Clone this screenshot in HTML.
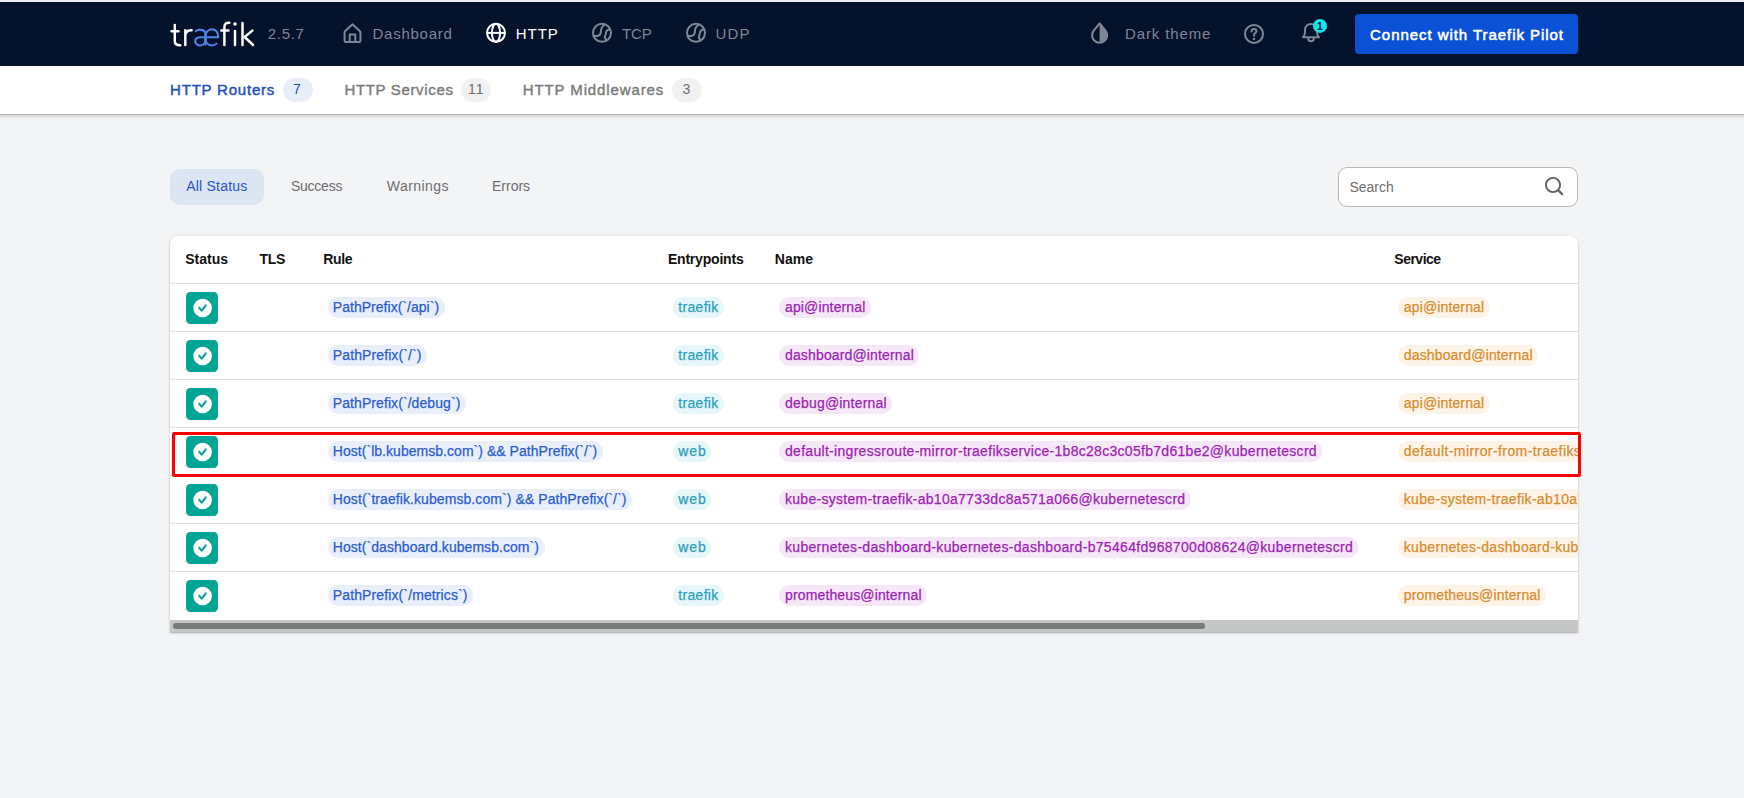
<!DOCTYPE html>
<html><head><meta charset="utf-8">
<style>
html,body{margin:0;padding:0;}
body{width:1744px;height:798px;overflow:hidden;position:relative;background:#f3f4f6;font-family:"Liberation Sans",sans-serif;}
.abs{position:absolute;}
.t{position:absolute;white-space:nowrap;line-height:1;}
.chip{position:absolute;height:21px;border-radius:10px;}
</style></head><body>
<div class="abs" style="left:0;top:0;width:1744px;height:2px;background:#efefed"></div>
<div class="abs" style="left:0;top:2px;width:1744px;height:64px;background:#05122b"></div>
<div class="abs" style="left:0;top:66px;width:1744px;height:48px;background:#ffffff"></div>
<div class="abs" style="left:0;top:114px;width:1744px;height:1px;background:#b3b7b9"></div>
<div class="abs" style="left:0;top:115px;width:1744px;height:4px;background:linear-gradient(#d5d7d9,#f3f4f6)"></div>
<svg class="abs" style="left:0;top:0" width="300" height="66" viewBox="0 0 300 66">
<g fill="none" stroke="#ffffff" stroke-width="2.45" stroke-linecap="round" stroke-linejoin="round">
<path d="M174.8,24.9 V41.2 C174.8,44.2 176.5,45.2 180.2,45.2"/>
<path d="M171.6,31.2 H178.4"/>
<path d="M185.3,30.3 V45 M185.3,35 C186,31.5 188.5,30.1 191.6,30.3"/>
<path d="M224.4,45 V27 C224.4,23.8 226.2,22.6 229.3,22.8 M221.3,30.4 H228.5"/>
<path d="M235,31 V45"/>
<path d="M242.5,23 V45 M252.4,30.6 L244.6,37 L253.1,45"/>
</g>
<circle cx="235" cy="23.9" r="1.75" fill="#ffffff"/>
<g fill="none" stroke="#5086ec" stroke-width="2.05" stroke-linecap="round" stroke-linejoin="round">
<path d="M195.8,31.2 C197.3,29.4 203.8,28.8 205.4,32.8 V44.6"/>
<path d="M205.4,37.3 H199.8 C193.6,37.3 193.8,45.4 199.8,45.4 C203.2,45.4 205.4,43.2 205.4,40.5"/>
<path d="M205.4,37.3 H218.2 C218.4,31.6 215.2,29.3 211.9,29.3 C207.8,29.3 205.4,32.6 205.4,37.5 C205.4,42.2 207.8,45.4 211.9,45.4 C213.9,45.4 215.5,44.7 216.6,43.6"/>
</g>
</svg>
<svg class="abs" style="left:0;top:0" width="1744" height="66" viewBox="0 0 1744 66">
<g fill="none" stroke="#7f8696" stroke-width="2" stroke-linecap="round" stroke-linejoin="round">
<path d="M345.6,42 H359.4 Q360.4,42 360.4,41 V32.2 Q360.4,31.6 360,31.2 L352.5,24.3 L345,31.2 Q344.6,31.6 344.6,32.2 V41 Q344.6,42 345.6,42 Z"/>
<path d="M349.7,42 V34.4 H355.3 V42"/>
<circle cx="602" cy="32.85" r="9"/>
<path d="M605,24.5 C602,26.4 601,28 601,30.5 C601,33.5 600.5,35.7 597,35.9 L593.6,36"/>
<path d="M609.8,29.4 C607,29.8 606,31 606,33 C606,34.5 604.5,36 604.8,37.5 C605,38.5 605.8,39.3 606.5,39.8"/>
<circle cx="696" cy="32.85" r="9"/>
<path d="M699,24.5 C696,26.4 695,28 695,30.5 C695,33.5 694.5,35.7 691,35.9 L687.6,36"/>
<path d="M703.8,29.4 C701,29.8 700,31 700,33 C700,34.5 698.5,36 698.8,37.5 C699,38.5 699.8,39.3 700.5,39.8"/>
<circle cx="1254" cy="33.9" r="9"/>
<path d="M1251.6,31.4 C1251.6,29.8 1252.7,29 1254,29 C1255.4,29 1256.4,29.9 1256.4,31.2 C1256.4,33 1254,33.2 1254,35.3 V35.8"/>
<path d="M1303,37.3 C1304.2,36.1 1305,34.7 1305,32.2 V29.8 C1305,26.3 1307.8,23.9 1311,23.9 C1314.2,23.9 1317,26.3 1317,29.8 V32.2 C1317,34.7 1317.8,36.1 1319,37.3 Z"/>
<path d="M1308.2,38.4 A2.8,2.8 0 0 0 1313.8,38.4"/>
</g>
<circle cx="1254" cy="38.9" r="1.2" fill="#7f8696"/>
<g fill="none" stroke="#ffffff" stroke-width="2">
<circle cx="496" cy="32.85" r="9"/>
<ellipse cx="496" cy="32.85" rx="4.1" ry="9"/>
<path d="M487,32.9 H505"/>
</g>
<g transform="translate(1099.6,35.3)">
<path d="M0,-12 L5.85,-4.69 A7.5,7.5 0 1 1 -5.85,-4.69 Z" fill="none" stroke="#7f8696" stroke-width="2.1" stroke-linejoin="round"/>
<path d="M0,-12 L5.85,-4.69 A7.5,7.5 0 0 1 0,7.5 Z" fill="#7f8696"/>
</g>
<circle cx="1320" cy="25.9" r="7" fill="#14e6ee"/>
</svg>
<div class="abs" style="left:1355px;top:14px;width:223px;height:40px;border-radius:4px;background:#0b51d6"></div>
<div class="abs" style="left:283px;top:78px;width:30px;height:24px;border-radius:12px;background:#e7eef9"></div>
<div class="abs" style="left:461px;top:78px;width:30px;height:24px;border-radius:12px;background:#f1f1f1"></div>
<div class="abs" style="left:672px;top:78px;width:30px;height:24px;border-radius:12px;background:#f1f1f1"></div>
<div class="abs" style="left:170px;top:169px;width:94px;height:36px;border-radius:10px;background:#dce5f2"></div>
<div class="abs" style="left:1338px;top:167px;width:238px;height:38px;border-radius:9px;background:#fff;border:1px solid #b8b8b8"></div>
<svg class="abs" style="left:1536px;top:170px" width="36" height="32" viewBox="1536 170 36 32">
<circle cx="1553" cy="185" r="7.1" fill="none" stroke="#626262" stroke-width="1.9"/>
<path d="M1558.4,190.4 L1562.2,194.2" stroke="#626262" stroke-width="2.2" stroke-linecap="round"/>
</svg>
<div class="abs" style="left:170px;top:236px;width:1408px;height:396px;border-radius:8px 8px 0 0;background:#fff;box-shadow:0 1px 3px rgba(0,0,0,0.2),0 1px 1px rgba(0,0,0,0.14)"></div>
<div class="abs" style="left:170px;top:283px;width:1408px;height:1px;background:#dedede"></div><div class="abs" style="left:170px;top:331px;width:1408px;height:1px;background:#dedede"></div><div class="abs" style="left:170px;top:379px;width:1408px;height:1px;background:#dedede"></div><div class="abs" style="left:170px;top:427px;width:1408px;height:1px;background:#dedede"></div><div class="abs" style="left:170px;top:475px;width:1408px;height:1px;background:#dedede"></div><div class="abs" style="left:170px;top:523px;width:1408px;height:1px;background:#dedede"></div><div class="abs" style="left:170px;top:571px;width:1408px;height:1px;background:#dedede"></div>
<svg class="abs" style="left:186px;top:292px" width="32" height="32" viewBox="0 0 32 32">
<rect x="0" y="0" width="32" height="32" rx="4.5" fill="#00a495"/>
<circle cx="16.6" cy="16" r="9.3" fill="#ffffff"/>
<path d="M13.3,15.9 L15.7,18.6 L19.7,13.4" fill="none" stroke="#00a495" stroke-width="2.1" stroke-linecap="round" stroke-linejoin="round"/>
</svg><svg class="abs" style="left:186px;top:340px" width="32" height="32" viewBox="0 0 32 32">
<rect x="0" y="0" width="32" height="32" rx="4.5" fill="#00a495"/>
<circle cx="16.6" cy="16" r="9.3" fill="#ffffff"/>
<path d="M13.3,15.9 L15.7,18.6 L19.7,13.4" fill="none" stroke="#00a495" stroke-width="2.1" stroke-linecap="round" stroke-linejoin="round"/>
</svg><svg class="abs" style="left:186px;top:388px" width="32" height="32" viewBox="0 0 32 32">
<rect x="0" y="0" width="32" height="32" rx="4.5" fill="#00a495"/>
<circle cx="16.6" cy="16" r="9.3" fill="#ffffff"/>
<path d="M13.3,15.9 L15.7,18.6 L19.7,13.4" fill="none" stroke="#00a495" stroke-width="2.1" stroke-linecap="round" stroke-linejoin="round"/>
</svg><svg class="abs" style="left:186px;top:436px" width="32" height="32" viewBox="0 0 32 32">
<rect x="0" y="0" width="32" height="32" rx="4.5" fill="#00a495"/>
<circle cx="16.6" cy="16" r="9.3" fill="#ffffff"/>
<path d="M13.3,15.9 L15.7,18.6 L19.7,13.4" fill="none" stroke="#00a495" stroke-width="2.1" stroke-linecap="round" stroke-linejoin="round"/>
</svg><svg class="abs" style="left:186px;top:484px" width="32" height="32" viewBox="0 0 32 32">
<rect x="0" y="0" width="32" height="32" rx="4.5" fill="#00a495"/>
<circle cx="16.6" cy="16" r="9.3" fill="#ffffff"/>
<path d="M13.3,15.9 L15.7,18.6 L19.7,13.4" fill="none" stroke="#00a495" stroke-width="2.1" stroke-linecap="round" stroke-linejoin="round"/>
</svg><svg class="abs" style="left:186px;top:532px" width="32" height="32" viewBox="0 0 32 32">
<rect x="0" y="0" width="32" height="32" rx="4.5" fill="#00a495"/>
<circle cx="16.6" cy="16" r="9.3" fill="#ffffff"/>
<path d="M13.3,15.9 L15.7,18.6 L19.7,13.4" fill="none" stroke="#00a495" stroke-width="2.1" stroke-linecap="round" stroke-linejoin="round"/>
</svg><svg class="abs" style="left:186px;top:580px" width="32" height="32" viewBox="0 0 32 32">
<rect x="0" y="0" width="32" height="32" rx="4.5" fill="#00a495"/>
<circle cx="16.6" cy="16" r="9.3" fill="#ffffff"/>
<path d="M13.3,15.9 L15.7,18.6 L19.7,13.4" fill="none" stroke="#00a495" stroke-width="2.1" stroke-linecap="round" stroke-linejoin="round"/>
</svg>
<div style="position:absolute;left:170px;top:236px;width:1408px;height:396px;overflow:hidden">
<div style="position:absolute;left:-170px;top:-236px;width:1744px;height:798px">
<div class="chip" style="left:328px;top:297px;width:117px;background:#e8effa"></div>
<div class="chip" style="left:673px;top:297px;width:51px;background:#e7f6f8"></div>
<div class="chip" style="left:779px;top:297px;width:92px;background:#f6e7f8"></div>
<div class="chip" style="left:1398px;top:297px;width:92px;background:#fdf3e7"></div>
<div class="chip" style="left:328px;top:345px;width:99px;background:#e8effa"></div>
<div class="chip" style="left:673px;top:345px;width:51px;background:#e7f6f8"></div>
<div class="chip" style="left:779px;top:345px;width:140px;background:#f6e7f8"></div>
<div class="chip" style="left:1398px;top:345px;width:140px;background:#fdf3e7"></div>
<div class="chip" style="left:328px;top:393px;width:138px;background:#e8effa"></div>
<div class="chip" style="left:673px;top:393px;width:51px;background:#e7f6f8"></div>
<div class="chip" style="left:779px;top:393px;width:113px;background:#f6e7f8"></div>
<div class="chip" style="left:1398px;top:393px;width:92px;background:#fdf3e7"></div>
<div class="chip" style="left:328px;top:441px;width:275px;background:#e8effa"></div>
<div class="chip" style="left:673px;top:441px;width:38px;background:#e7f6f8"></div>
<div class="chip" style="left:779px;top:441px;width:543px;background:#f6e7f8"></div>
<div class="chip" style="left:1398px;top:441px;width:400px;background:#fdf3e7"></div>
<div class="chip" style="left:328px;top:489px;width:304px;background:#e8effa"></div>
<div class="chip" style="left:673px;top:489px;width:38px;background:#e7f6f8"></div>
<div class="chip" style="left:779px;top:489px;width:412px;background:#f6e7f8"></div>
<div class="chip" style="left:1398px;top:489px;width:412px;background:#fdf3e7"></div>
<div class="chip" style="left:328px;top:537px;width:217px;background:#e8effa"></div>
<div class="chip" style="left:673px;top:537px;width:38px;background:#e7f6f8"></div>
<div class="chip" style="left:779px;top:537px;width:579px;background:#f6e7f8"></div>
<div class="chip" style="left:1398px;top:537px;width:579px;background:#fdf3e7"></div>
<div class="chip" style="left:328px;top:585px;width:145px;background:#e8effa"></div>
<div class="chip" style="left:673px;top:585px;width:51px;background:#e7f6f8"></div>
<div class="chip" style="left:779px;top:585px;width:148px;background:#f6e7f8"></div>
<div class="chip" style="left:1398px;top:585px;width:148px;background:#fdf3e7"></div>
<span class="t" id="k_rule0" style="left:332.80px;top:300.15px;font-size:14px;font-weight:normal;color:#2b5ccf;letter-spacing:0.029px;-webkit-text-stroke:0.25px #2b5ccf;">PathPrefix(`/api`)</span><span class="t" id="k_ep0" style="left:678.20px;top:300.15px;font-size:14px;font-weight:normal;color:#2c9fbd;letter-spacing:0.333px;-webkit-text-stroke:0.25px #2c9fbd;">traefik</span><span class="t" id="k_nm0" style="left:785.00px;top:300.15px;font-size:14px;font-weight:normal;color:#9c1fb2;letter-spacing:0.136px;-webkit-text-stroke:0.25px #9c1fb2;">api@internal</span><span class="t" id="k_sv0" style="left:1403.80px;top:300.15px;font-size:14px;font-weight:normal;color:#d88c2e;letter-spacing:0.136px;-webkit-text-stroke:0.25px #d88c2e;">api@internal</span><span class="t" id="k_rule1" style="left:332.80px;top:348.15px;font-size:14px;font-weight:normal;color:#2b5ccf;letter-spacing:0.107px;-webkit-text-stroke:0.25px #2b5ccf;">PathPrefix(`/`)</span><span class="t" id="k_ep1" style="left:678.20px;top:348.15px;font-size:14px;font-weight:normal;color:#2c9fbd;letter-spacing:0.333px;-webkit-text-stroke:0.25px #2c9fbd;">traefik</span><span class="t" id="k_nm1" style="left:785.00px;top:348.15px;font-size:14px;font-weight:normal;color:#9c1fb2;letter-spacing:0.147px;-webkit-text-stroke:0.25px #9c1fb2;">dashboard@internal</span><span class="t" id="k_sv1" style="left:1403.80px;top:348.15px;font-size:14px;font-weight:normal;color:#d88c2e;letter-spacing:0.147px;-webkit-text-stroke:0.25px #d88c2e;">dashboard@internal</span><span class="t" id="k_rule2" style="left:332.80px;top:396.15px;font-size:14px;font-weight:normal;color:#2b5ccf;letter-spacing:0.079px;-webkit-text-stroke:0.25px #2b5ccf;">PathPrefix(`/debug`)</span><span class="t" id="k_ep2" style="left:678.20px;top:396.15px;font-size:14px;font-weight:normal;color:#2c9fbd;letter-spacing:0.333px;-webkit-text-stroke:0.25px #2c9fbd;">traefik</span><span class="t" id="k_nm2" style="left:785.00px;top:396.15px;font-size:14px;font-weight:normal;color:#9c1fb2;letter-spacing:0.192px;-webkit-text-stroke:0.25px #9c1fb2;">debug@internal</span><span class="t" id="k_sv2" style="left:1403.80px;top:396.15px;font-size:14px;font-weight:normal;color:#d88c2e;letter-spacing:0.136px;-webkit-text-stroke:0.25px #d88c2e;">api@internal</span><span class="t" id="k_rule3" style="left:332.80px;top:444.15px;font-size:14px;font-weight:normal;color:#2b5ccf;letter-spacing:0.038px;-webkit-text-stroke:0.25px #2b5ccf;">Host(`lb.kubemsb.com`) &amp;&amp; PathPrefix(`/`)</span><span class="t" id="k_ep3" style="left:678.20px;top:444.15px;font-size:14px;font-weight:normal;color:#2c9fbd;letter-spacing:1.000px;-webkit-text-stroke:0.25px #2c9fbd;">web</span><span class="t" id="k_nm3" style="left:785.00px;top:444.15px;font-size:14px;font-weight:normal;color:#9c1fb2;letter-spacing:0.296px;-webkit-text-stroke:0.25px #9c1fb2;">default-ingressroute-mirror-traefikservice-1b8c28c3c05fb7d61be2@kubernetescrd</span><span class="t" id="k_sv3" style="left:1403.80px;top:444.15px;font-size:14px;font-weight:normal;color:#d88c2e;letter-spacing:0.420px;-webkit-text-stroke:0.25px #d88c2e;">default-mirror-from-traefikservice@kubernetescrd</span><span class="t" id="k_rule4" style="left:332.80px;top:492.15px;font-size:14px;font-weight:normal;color:#2b5ccf;letter-spacing:0.078px;-webkit-text-stroke:0.25px #2b5ccf;">Host(`traefik.kubemsb.com`) &amp;&amp; PathPrefix(`/`)</span><span class="t" id="k_ep4" style="left:678.20px;top:492.15px;font-size:14px;font-weight:normal;color:#2c9fbd;letter-spacing:1.000px;-webkit-text-stroke:0.25px #2c9fbd;">web</span><span class="t" id="k_nm4" style="left:785.00px;top:492.15px;font-size:14px;font-weight:normal;color:#9c1fb2;letter-spacing:0.292px;-webkit-text-stroke:0.25px #9c1fb2;">kube-system-traefik-ab10a7733dc8a571a066@kubernetescrd</span><span class="t" id="k_sv4" style="left:1403.80px;top:492.15px;font-size:14px;font-weight:normal;color:#d88c2e;letter-spacing:0.313px;-webkit-text-stroke:0.25px #d88c2e;">kube-system-traefik-ab10a7733dc8a571a066@kubernetescrd</span><span class="t" id="k_rule5" style="left:332.80px;top:540.15px;font-size:14px;font-weight:normal;color:#2b5ccf;letter-spacing:0.054px;-webkit-text-stroke:0.25px #2b5ccf;">Host(`dashboard.kubemsb.com`)</span><span class="t" id="k_ep5" style="left:678.20px;top:540.15px;font-size:14px;font-weight:normal;color:#2c9fbd;letter-spacing:1.000px;-webkit-text-stroke:0.25px #2c9fbd;">web</span><span class="t" id="k_nm5" style="left:785.00px;top:540.15px;font-size:14px;font-weight:normal;color:#9c1fb2;letter-spacing:0.313px;-webkit-text-stroke:0.25px #9c1fb2;">kubernetes-dashboard-kubernetes-dashboard-b75464fd968700d08624@kubernetescrd</span><span class="t" id="k_sv5" style="left:1403.80px;top:540.15px;font-size:14px;font-weight:normal;color:#d88c2e;letter-spacing:0.315px;-webkit-text-stroke:0.25px #d88c2e;">kubernetes-dashboard-kubernetes-dashboard-b75464fd968700d08624@kubernetescrd</span><span class="t" id="k_rule6" style="left:332.80px;top:588.15px;font-size:14px;font-weight:normal;color:#2b5ccf;letter-spacing:0.119px;-webkit-text-stroke:0.25px #2b5ccf;">PathPrefix(`/metrics`)</span><span class="t" id="k_ep6" style="left:678.20px;top:588.15px;font-size:14px;font-weight:normal;color:#2c9fbd;letter-spacing:0.333px;-webkit-text-stroke:0.25px #2c9fbd;">traefik</span><span class="t" id="k_nm6" style="left:785.00px;top:588.15px;font-size:14px;font-weight:normal;color:#9c1fb2;letter-spacing:0.139px;-webkit-text-stroke:0.25px #9c1fb2;">prometheus@internal</span><span class="t" id="k_sv6" style="left:1403.80px;top:588.15px;font-size:14px;font-weight:normal;color:#d88c2e;letter-spacing:0.139px;-webkit-text-stroke:0.25px #d88c2e;">prometheus@internal</span>
</div></div>
<span class="t" id="k_ver" style="left:267.80px;top:26.30px;font-size:15px;font-weight:normal;color:#7f8696;letter-spacing:0.700px;">2.5.7</span><span class="t" id="k_dash" style="left:372.50px;top:26.30px;font-size:15px;font-weight:normal;color:#7f8696;letter-spacing:0.750px;">Dashboard</span><span class="t" id="k_http" style="left:515.80px;top:26.30px;font-size:15px;font-weight:normal;color:#ffffff;letter-spacing:0.933px;">HTTP</span><span class="t" id="k_tcp" style="left:622.00px;top:26.30px;font-size:15px;font-weight:normal;color:#7f8696;letter-spacing:-0.100px;">TCP</span><span class="t" id="k_udp" style="left:715.40px;top:26.30px;font-size:15px;font-weight:normal;color:#7f8696;letter-spacing:1.200px;">UDP</span><span class="t" id="k_dark" style="left:1125.00px;top:26.30px;font-size:15px;font-weight:normal;color:#7f8696;letter-spacing:0.867px;">Dark theme</span><span class="t" id="k_pilot" style="left:1370.10px;top:27.30px;font-size:15px;font-weight:normal;color:#ffffff;letter-spacing:0.944px;-webkit-text-stroke:0.55px #ffffff;">Connect with Traefik Pilot</span><span class="t" id="k_badge1" style="left:1317.00px;top:21.73px;font-size:10px;font-weight:bold;color:#05122b;letter-spacing:0.000px;">1</span><span class="t" id="k_routers" style="left:170.10px;top:82.30px;font-size:15px;font-weight:normal;color:#1f4fc2;letter-spacing:0.782px;-webkit-text-stroke:0.45px #1f4fc2;">HTTP Routers</span><span class="t" id="k_r7" style="left:293.00px;top:82.15px;font-size:14px;font-weight:normal;color:#1f4fc2;letter-spacing:0.000px;">7</span><span class="t" id="k_services" style="left:344.50px;top:82.30px;font-size:15px;font-weight:normal;color:#7a7a7a;letter-spacing:0.650px;-webkit-text-stroke:0.4px #7a7a7a;">HTTP Services</span><span class="t" id="k_s11" style="left:468.00px;top:82.15px;font-size:14px;font-weight:normal;color:#6f6f6f;letter-spacing:1.000px;">11</span><span class="t" id="k_mid" style="left:522.80px;top:82.30px;font-size:15px;font-weight:normal;color:#7a7a7a;letter-spacing:0.880px;-webkit-text-stroke:0.4px #7a7a7a;">HTTP Middlewares</span><span class="t" id="k_m3" style="left:682.50px;top:82.15px;font-size:14px;font-weight:normal;color:#6f6f6f;letter-spacing:0.000px;">3</span><span class="t" id="k_all" style="left:186.20px;top:179.35px;font-size:14px;font-weight:normal;color:#2557c6;letter-spacing:0.222px;">All Status</span><span class="t" id="k_succ" style="left:291.00px;top:179.35px;font-size:14px;font-weight:normal;color:#6e6e6e;letter-spacing:-0.250px;">Success</span><span class="t" id="k_warn" style="left:386.80px;top:179.35px;font-size:14px;font-weight:normal;color:#6e6e6e;letter-spacing:0.429px;">Warnings</span><span class="t" id="k_err" style="left:492.00px;top:179.35px;font-size:14px;font-weight:normal;color:#6e6e6e;letter-spacing:0.000px;">Errors</span><span class="t" id="k_search" style="left:1349.40px;top:180.15px;font-size:14px;font-weight:normal;color:#6f6f6f;letter-spacing:0.000px;">Search</span><span class="t" id="k_th_status" style="left:185.20px;top:252.25px;font-size:14px;font-weight:bold;color:#111111;letter-spacing:0.000px;">Status</span><span class="t" id="k_th_tls" style="left:259.40px;top:252.25px;font-size:14px;font-weight:bold;color:#111111;letter-spacing:-0.250px;">TLS</span><span class="t" id="k_th_rule" style="left:323.30px;top:252.25px;font-size:14px;font-weight:bold;color:#111111;letter-spacing:-0.333px;">Rule</span><span class="t" id="k_th_entry" style="left:667.90px;top:252.25px;font-size:14px;font-weight:bold;color:#111111;letter-spacing:-0.200px;">Entrypoints</span><span class="t" id="k_th_name" style="left:774.80px;top:252.25px;font-size:14px;font-weight:bold;color:#111111;letter-spacing:-0.000px;">Name</span><span class="t" id="k_th_service" style="left:1394.30px;top:252.25px;font-size:14px;font-weight:bold;color:#111111;letter-spacing:-0.500px;">Service</span>
<div class="abs" style="left:170px;top:620px;width:1408px;height:12px;background:#c5c6c6"></div>
<div class="abs" style="left:173px;top:623px;width:1032px;height:6px;border-radius:3px;background:#777b7b"></div>
<div class="abs" style="left:172px;top:432px;width:1403px;height:39px;border:3px solid #ff0000;border-radius:2px"></div>
</body></html>
